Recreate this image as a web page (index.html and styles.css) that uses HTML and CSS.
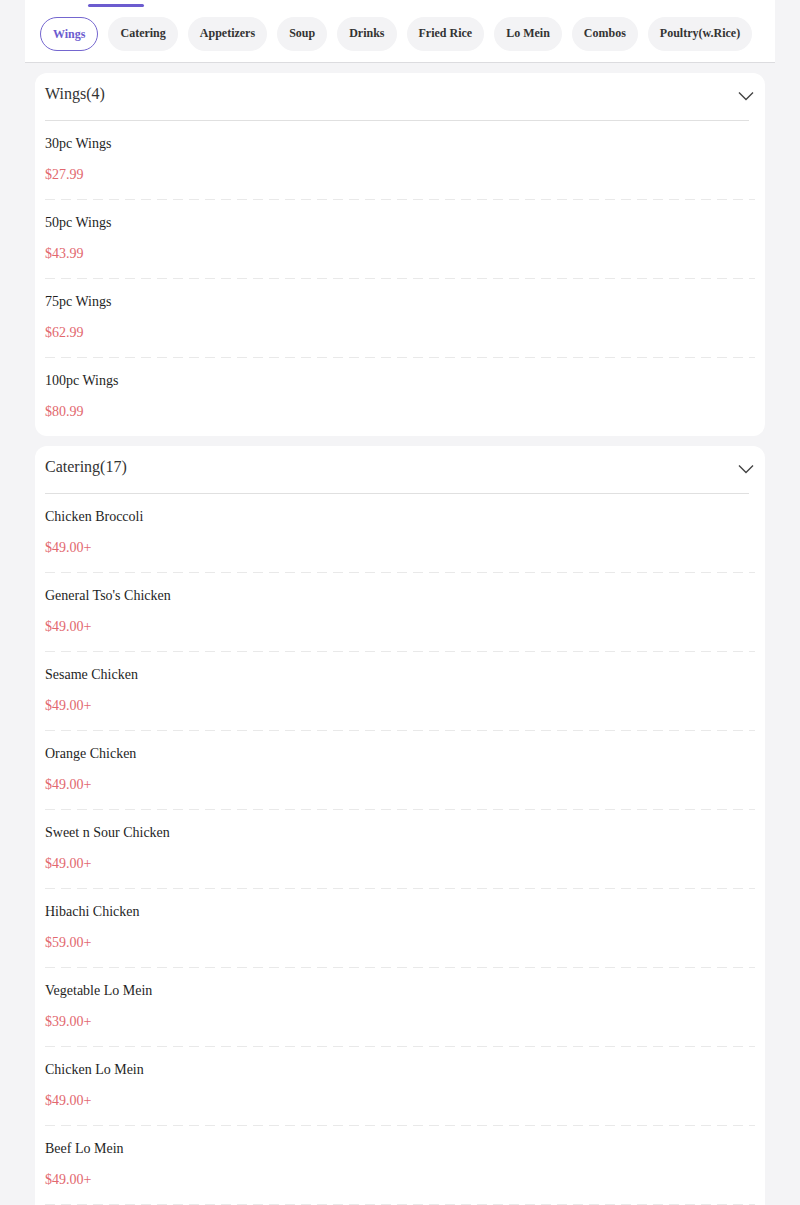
FILE: index.html
```html
<!DOCTYPE html>
<html lang="en">
<head>
<meta charset="utf-8">
<title>Menu</title>
<link rel="stylesheet" href="styles.css">
</head>
<body>
<div class="page">
  <nav class="tabs-bar">
    <span class="indicator"></span>
    <a class="tab active">Wings</a>
    <a class="tab">Catering</a>
    <a class="tab">Appetizers</a>
    <a class="tab">Soup</a>
    <a class="tab">Drinks</a>
    <a class="tab">Fried Rice</a>
    <a class="tab">Lo Mein</a>
    <a class="tab">Combos</a>
    <a class="tab">Poultry(w.Rice)</a>
  </nav>
  <main class="content">
    <section class="card">
      <div class="card-header">
        <span class="card-title">Wings(4)</span>
        <svg class="chevron" width="16" height="10" viewBox="0 0 16 10"><polyline points="1,1.5 8,8.5 15,1.5" fill="none" stroke="#444" stroke-width="1.4"/></svg>
      </div>
      <div class="card-divider"></div>
      <div class="item"><div class="item-name">30pc Wings</div><div class="item-price">$27.99</div></div>
      <div class="item"><div class="item-name">50pc Wings</div><div class="item-price">$43.99</div></div>
      <div class="item"><div class="item-name">75pc Wings</div><div class="item-price">$62.99</div></div>
      <div class="item"><div class="item-name">100pc Wings</div><div class="item-price">$80.99</div></div>
    </section>
    <section class="card">
      <div class="card-header">
        <span class="card-title">Catering(17)</span>
        <svg class="chevron" width="16" height="10" viewBox="0 0 16 10"><polyline points="1,1.5 8,8.5 15,1.5" fill="none" stroke="#444" stroke-width="1.4"/></svg>
      </div>
      <div class="card-divider"></div>
      <div class="item"><div class="item-name">Chicken Broccoli</div><div class="item-price">$49.00+</div></div>
      <div class="item"><div class="item-name">General Tso's Chicken</div><div class="item-price">$49.00+</div></div>
      <div class="item"><div class="item-name">Sesame Chicken</div><div class="item-price">$49.00+</div></div>
      <div class="item"><div class="item-name">Orange Chicken</div><div class="item-price">$49.00+</div></div>
      <div class="item"><div class="item-name">Sweet n Sour Chicken</div><div class="item-price">$49.00+</div></div>
      <div class="item"><div class="item-name">Hibachi Chicken</div><div class="item-price">$59.00+</div></div>
      <div class="item"><div class="item-name">Vegetable Lo Mein</div><div class="item-price">$39.00+</div></div>
      <div class="item"><div class="item-name">Chicken Lo Mein</div><div class="item-price">$49.00+</div></div>
      <div class="item"><div class="item-name">Beef Lo Mein</div><div class="item-price">$49.00+</div></div>
      <div class="item"><div class="item-name">Shrimp Lo Mein</div><div class="item-price">$49.00+</div></div>
    </section>
  </main>
</div>
</body>
</html>
```

FILE: styles.css
```css
* { box-sizing: border-box; }

html, body {
  margin: 0;
  padding: 0;
  background: #f4f4f6;
  font-family: "Liberation Serif", "Times New Roman", serif;
}

.page {
  padding: 0 25px;
}

.tabs-bar {
  position: relative;
  display: flex;
  gap: 10px;
  background: #ffffff;
  padding: 17px 15px 11px;
  border-bottom: 1px solid #dcdcdf;
  overflow: hidden;
}

.indicator {
  position: absolute;
  left: 63px;
  top: 4px;
  width: 56px;
  height: 3px;
  border-radius: 2px;
  background: #6c5ccf;
}

.tab {
  display: flex;
  align-items: center;
  height: 34px;
  padding: 0 11px 2px;
  border-radius: 17px;
  background: #f3f3f5;
  border: 1px solid #f3f3f5;
  color: #333333;
  font-size: 12px;
  font-weight: bold;
  white-space: nowrap;
  flex-shrink: 0;
}

.tab.active {
  background: #ffffff;
  border-color: #7466cf;
  color: #6c5ccf;
  padding: 0 12px;
}

.content {
  display: flex;
  flex-direction: column;
  gap: 10px;
  padding: 10px;
}

.card {
  background: #ffffff;
  border-radius: 12px;
  padding: 0 10px;
}

.card-header {
  display: flex;
  align-items: center;
  justify-content: space-between;
  height: 47px;
  padding-bottom: 5px;
  color: #333333;
  font-size: 16px;
}

.chevron {
  margin-top: 4px;
  margin-right: 1px;
}

.card-divider {
  height: 1px;
  background: #e0e0e0;
  margin-right: 6px;
}

.item {
  position: relative;
  padding: 13px 0 14px;
  font-size: 14px;
  line-height: 20px;
}

.item:not(:last-child) {
  padding-bottom: 15px;
}

.item:not(:last-child)::after {
  content: "";
  position: absolute;
  left: 0;
  right: 0;
  bottom: 0;
  height: 1px;
  background: repeating-linear-gradient(to right, #e9e9e9 0 10px, transparent 10px 16px);
}

.item-name {
  color: #1f1f1f;
}

.item-price {
  margin-top: 11px;
  color: #e2686e;
}
```
